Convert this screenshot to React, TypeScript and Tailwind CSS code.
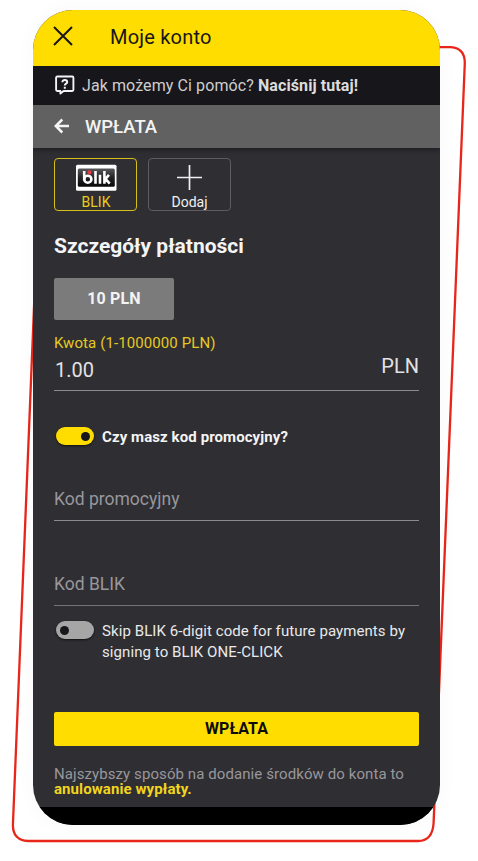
import React from "react";

function Outline() {
  return (
    <svg className="pointer-events-none absolute inset-0" width="478" height="861" viewBox="0 0 478 861" fill="none">
      <path
        d="M60 47.2H451Q464.8 48.2 464.8 63L433.6 823Q432.5 841 418 841H28Q12.8 840 12.9 825L44 62Q45 48 60 47.2Z"
        stroke="#e8261a"
        strokeWidth="2.3"
      />
    </svg>
  );
}

function HelpIcon() {
  return (
    <svg width="20" height="20" viewBox="0 0 20 20" fill="none" className="-mt-px shrink-0">
      <path d="M2.3 1.5h14.9a1.2 1.2 0 0 1 1.2 1.2v12.1a1.2 1.2 0 0 1-1.2 1.2H8.6L5.4 18.6V16H2.3a1.2 1.2 0 0 1-1.2-1.2V2.7A1.2 1.2 0 0 1 2.3 1.5Z" stroke="#f4f4f4" strokeWidth="1.9" strokeLinejoin="round" />
      <path d="M7.4 7.2c0-3 4.8-2.9 4.8 0 0 1.6-2.4 1.4-2.4 3.2M9.8 11.7v2" stroke="#f4f4f4" strokeWidth="2" />
    </svg>
  );
}

function BlikLogo() {
  return (
    <svg width="42" height="27" viewBox="0 0 42 27" className="shrink-0">
      <defs>
        <linearGradient id="blikBg" x1="0" y1="0" x2="0" y2="1">
          <stop offset="0" stopColor="#5a5a5c" />
          <stop offset=".5" stopColor="#232325" />
          <stop offset="1" stopColor="#09090a" />
        </linearGradient>
      </defs>
      <rect x="1" y=".8" width="40.5" height="26" rx="1.5" fill="#fff" />
      <rect x="2.8" y="4.4" width="37" height="18.4" rx="1.5" fill="url(#blikBg)" />
      <g stroke="#fff" strokeWidth="2.6" fill="none">
        <path d="M9.2 7v9M20.5 7v12.7M25 10.8v8.9M29.4 7v12.7M34 10.8l-3.5 4.1 4.2 4.8" />
        <ellipse cx="12.8" cy="15.2" rx="3.6" ry="3.5" />
      </g>
      <circle cx="14.4" cy="8.4" r="2.1" fill="#e73a43" />
    </svg>
  );
}

function Toggle({ on }: { on?: boolean }) {
  return (
    <span className={`flex h-[18px] w-[38px] shrink-0 items-center rounded-full shadow-[0_1px_2px_#111] ${on ? "justify-end bg-[#ffdd00] pr-[4px]" : "justify-start bg-[#a6a6a6] pl-[4px]"}`}>
      <span className="size-[9px] rounded-full bg-[#18171c]" />
    </span>
  );
}

export default function App() {
  return (
    <div className="relative h-[861px] w-[478px] overflow-hidden bg-white font-[Roboto,sans-serif]">
      <div className="flex h-full flex-col pl-[33px] pt-[9.5px]">
        <Outline />
        <main className="relative flex h-[815px] w-[407px] flex-col overflow-hidden rounded-[40px] bg-[#2f2e33] shadow-[0_0_20px_#00000009]">
          <header className="flex h-[56.5px] shrink-0 items-center bg-[#ffdd00] pl-[20px] text-[#17161a]">
            <svg width="20" height="20" viewBox="0 0 20 20" fill="none" className="-mt-[3px]">
              <path d="M1 1L19 19M19 1L1 19" stroke="currentColor" strokeWidth="2" />
            </svg>
            <h1 className="-mt-[1px] ml-[37px] text-[20px] leading-6 tracking-[0.2px]">Moje konto</h1>
          </header>
          <div className="flex h-[39px] shrink-0 items-center bg-[#17161b] pl-[22px] text-[#cecece]">
            <HelpIcon />
            <p className="ml-[7px] whitespace-nowrap text-base leading-5 tracking-[0.095px]">
              Jak możemy Ci pomóc? <b className="font-bold text-[#dcdcdc]">Naciśnij tutaj!</b>
            </p>
          </div>
          <div className="relative flex h-[42.5px] shrink-0 items-center bg-[#616161] pl-[21px] text-[#f4f4f4] shadow-[0_1px_5px_#18171b]">
            <svg width="16" height="16" viewBox="0 0 16 16" fill="none">
              <path d="M15 8H2M8.3 1.5L1.8 8L8.3 14.5" stroke="currentColor" strokeWidth="2.5" />
            </svg>
            <h2 className="ml-[15px] mt-[2px] text-[18.5px] font-medium leading-6">WPŁATA</h2>
          </div>
          <section className="flex grow flex-col px-[21px] pt-[10.5px]">
            <div className="flex gap-[11px]">
              <button className="flex h-[53px] w-[83px] flex-col items-center rounded-[4px] border border-[#d8be1a] pt-[5px] text-sm leading-[18px] text-[#e9ce19]">
                <BlikLogo />
                <span className="mt-[2px] pl-px">BLIK</span>
              </button>
              <button className="flex h-[53px] w-[83px] flex-col items-center rounded-[4px] border border-[#5d5d61] pt-[5px] text-sm leading-[18px] text-[#f0f0f0]">
                <svg width="27" height="27" viewBox="0 0 27 27" className="shrink-0">
                  <path d="M13.5 1v25M1 13.5h25" stroke="currentColor" strokeWidth="1.7" />
                </svg>
                <span className="mt-[2px]">Dodaj</span>
              </button>
            </div>
            <h3 className="mt-[22.5px] text-[21px] font-bold leading-6 text-[#f4f4f4]">Szczegóły płatności</h3>
            <button className="mt-[20px] h-[42px] w-[120px] shrink-0 rounded-[2px] bg-[#7b7b7b] pt-px text-base font-bold tracking-[0.15px] text-[#f3f3f3]">10 PLN</button>
            <label className="mt-[13.5px] text-[15px] leading-5 tracking-[0.1px] text-[#e5ca20]">Kwota (1-1000000 PLN)</label>
            <div className="flex h-[38px] shrink-0 justify-between border-b border-[#8b8b8e] pl-px text-xl leading-6 text-[#e2e2e4]">
              <span className="mt-[5px]">1.00</span>
              <span className="mt-[1px]">PLN</span>
            </div>
            <div className="mt-[35px] flex h-[20px] items-center pl-[2px]">
              <Toggle on />
              <span className="ml-[8px] pt-[2px] text-[15px] font-bold leading-5 tracking-[0.09px] text-[#f4f4f4]">Czy masz kod promocyjny?</span>
            </div>
            <div className="mt-[41px] h-[34px] shrink-0 border-b border-[#8b8b8e] text-[17.5px] leading-6 text-[#98979b]">Kod promocyjny</div>
            <div className="mt-[51px] h-[34px] shrink-0 border-b border-[#747377] text-[17.5px] leading-6 text-[#98979b]">Kod BLIK</div>
            <div className="mt-[15px] flex pl-[2px]">
              <Toggle />
              <p className="ml-[8px] whitespace-nowrap text-[15px] leading-[21px] tracking-[0.08px] text-[#e9e9ea]">
                Skip BLIK 6-digit code for future payments by<br />signing to BLIK ONE-CLICK
              </p>
            </div>
            <button className="mt-[49px] h-[34px] shrink-0 rounded-[2px] bg-[#ffdd00] text-base font-bold text-[#0c0c0c]">WPŁATA</button>
            <p className="mt-[21px] whitespace-nowrap text-[15px] leading-[15px] tracking-[0.085px] text-[#98979b]">
              Najszybszy sposób na dodanie środków do konta to<br />
              <b className="text-[#f1d51d]">anulowanie wypłaty.</b>
            </p>
          </section>
          <div className="h-[17.5px] shrink-0 bg-black" />
        </main>
      </div>
    </div>
  );
}
